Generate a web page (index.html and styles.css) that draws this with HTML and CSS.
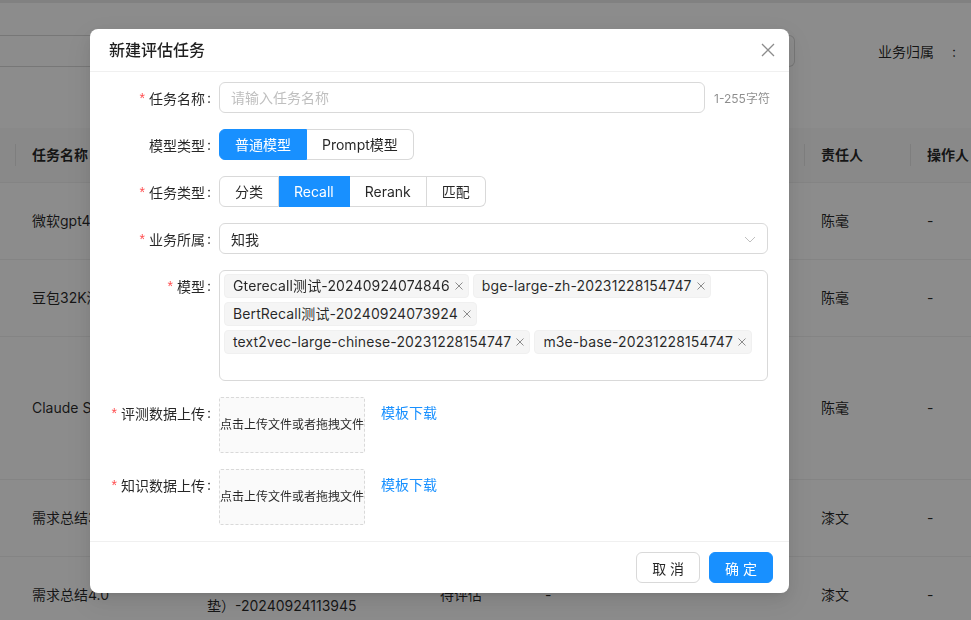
FILE: index.html
```html
<!DOCTYPE html>
<html lang="zh-CN">
<head>
<meta charset="utf-8">
<title>新建评估任务</title>
<link rel="stylesheet" href="styles.css">
</head>
<body>
<div class="page">
  <div class="topbar"></div>
  <div class="filters">
    <div class="search"></div>
    <div class="filter-label">业务归属</div>
    <div class="filter-colon">:</div>
  </div>
  <table class="table">
    <colgroup>
      <col class="c0"><col class="c1"><col class="c2"><col class="c3"><col class="c4"><col class="c5"><col class="c6">
    </colgroup>
    <thead>
      <tr>
        <th class="sep"></th>
        <th class="sep">任务名称</th>
        <th class="sep">评测集</th>
        <th class="sep">状态</th>
        <th class="sep">进度</th>
        <th class="sep">责任人</th>
        <th>操作人</th>
      </tr>
    </thead>
    <tbody>
      <tr class="r77"><td></td><td class="nowrap">微软gpt4o测评</td><td></td><td></td><td></td><td>陈毫</td><td>-</td></tr>
      <tr class="r77"><td></td><td class="nowrap">豆包32K测评</td><td></td><td></td><td></td><td>陈毫</td><td>-</td></tr>
      <tr class="r143"><td></td><td class="nowrap">Claude Sonnet</td><td></td><td></td><td></td><td>陈毫</td><td>-</td></tr>
      <tr class="r77"><td></td><td class="nowrap">需求总结3.0</td><td></td><td></td><td></td><td>漆文</td><td>-</td></tr>
      <tr><td></td><td class="nowrap">需求总结4.0</td><td>需求总结（铺<br>垫）-20240924113945</td><td>待评估</td><td>-</td><td>漆文</td><td>-</td></tr>
    </tbody>
  </table>
</div>

<div class="mask"></div>

<div class="modal">
  <div class="modal-header">
    <div class="modal-title">新建评估任务</div>
    <span class="modal-close">
      <svg width="14" height="14" viewBox="0 0 14 14"><path d="M1 1 L13 13 M13 1 L1 13" stroke="#8c8c8c" stroke-width="1.3" fill="none"/></svg>
    </span>
  </div>
  <div class="modal-body">
    <div class="form-row">
      <div class="form-label"><span class="req">*</span>任务名称<span class="colon">:</span></div>
      <div class="control with-hint">
        <div class="input placeholder">请输入任务名称</div>
        <span class="hint">1-255字符</span>
      </div>
    </div>
    <div class="form-row">
      <div class="form-label">模型类型<span class="colon">:</span></div>
      <div class="control">
        <div class="radio-group">
          <span class="radio-btn checked">普通模型</span><span class="radio-btn">Prompt模型</span>
        </div>
      </div>
    </div>
    <div class="form-row">
      <div class="form-label"><span class="req">*</span>任务类型<span class="colon">:</span></div>
      <div class="control">
        <div class="radio-group">
          <span class="radio-btn">分类</span><span class="radio-btn checked">Recall</span><span class="radio-btn">Rerank</span><span class="radio-btn">匹配</span>
        </div>
      </div>
    </div>
    <div class="form-row">
      <div class="form-label"><span class="req">*</span>业务所属<span class="colon">:</span></div>
      <div class="control">
        <div class="select">
          <span>知我</span>
          <svg class="arrow" width="12" height="12" viewBox="0 0 12 12"><path d="M1 4 L6 9 L11 4" stroke="#bfbfbf" stroke-width="1" fill="none"/></svg>
        </div>
      </div>
    </div>
    <div class="form-row">
      <div class="form-label"><span class="req">*</span>模型<span class="colon">:</span></div>
      <div class="control">
        <div class="multi">
          <span class="tag">Gterecall测试-20240924074846<svg class="tag-x" width="8" height="8" viewBox="0 0 8 8"><path d="M0.5 0.5 L7.5 7.5 M7.5 0.5 L0.5 7.5" stroke="#8c8c8c" stroke-width="1" fill="none"/></svg></span>
          <span class="tag">bge-large-zh-20231228154747<svg class="tag-x" width="8" height="8" viewBox="0 0 8 8"><path d="M0.5 0.5 L7.5 7.5 M7.5 0.5 L0.5 7.5" stroke="#8c8c8c" stroke-width="1" fill="none"/></svg></span>
          <span class="tag">BertRecall测试-20240924073924<svg class="tag-x" width="8" height="8" viewBox="0 0 8 8"><path d="M0.5 0.5 L7.5 7.5 M7.5 0.5 L0.5 7.5" stroke="#8c8c8c" stroke-width="1" fill="none"/></svg></span>
          <span class="tag">text2vec-large-chinese-20231228154747<svg class="tag-x" width="8" height="8" viewBox="0 0 8 8"><path d="M0.5 0.5 L7.5 7.5 M7.5 0.5 L0.5 7.5" stroke="#8c8c8c" stroke-width="1" fill="none"/></svg></span>
          <span class="tag">m3e-base-20231228154747<svg class="tag-x" width="8" height="8" viewBox="0 0 8 8"><path d="M0.5 0.5 L7.5 7.5 M7.5 0.5 L0.5 7.5" stroke="#8c8c8c" stroke-width="1" fill="none"/></svg></span>
          <span class="multi-input"></span>
        </div>
      </div>
    </div>
    <div class="form-row">
      <div class="form-label"><span class="req">*</span>评测数据上传<span class="colon">:</span></div>
      <div class="control upload-row">
        <div class="upload">点击上传文件或者拖拽文件</div>
        <a class="link">模板下载</a>
      </div>
    </div>
    <div class="form-row">
      <div class="form-label"><span class="req">*</span>知识数据上传<span class="colon">:</span></div>
      <div class="control upload-row">
        <div class="upload">点击上传文件或者拖拽文件</div>
        <a class="link">模板下载</a>
      </div>
    </div>
  </div>
  <div class="modal-footer">
    <button class="btn">取 消</button>
    <button class="btn primary">确 定</button>
  </div>
</div>
</body>
</html>
```

FILE: styles.css
```css
* { box-sizing: border-box; }

html, body {
  margin: 0;
  padding: 0;
  height: 100%;
  overflow: hidden;
}

body {
  font-family: Inter, "Noto Sans CJK SC", sans-serif;
  font-size: 14px;
  color: rgba(0, 0, 0, 0.85);
  background: #ffffff;
}

/* ---------- background page ---------- */
.page {
  width: 971px;
}

.topbar {
  height: 3px;
  background: #ececec;
}

.filters {
  display: flex;
  align-items: center;
  margin-top: 32px;
  height: 32px;
}

.search {
  width: 795px;
  height: 32px;
  border: 1px solid #d9d9d9;
  border-left: 0;
  border-radius: 0 6px 6px 0;
}

.filter-label {
  margin-left: 83px;
}

.filter-colon {
  margin-left: 18px;
}

.table {
  margin-top: 61px;
  border-collapse: collapse;
  table-layout: fixed;
  width: 1061px;
  line-height: 22px;
}

.c0 { width: 16px; }
.c1 { width: 175px; }
.c2 { width: 233px; }
.c3 { width: 105px; }
.c4 { width: 276px; }
.c5 { width: 106px; }
.c6 { width: 150px; }

.table th {
  position: relative;
  height: 54px;
  padding: 0 16px;
  text-align: left;
  font-weight: 600;
  background: #fafafa;
  border-bottom: 1px solid #f0f0f0;
  white-space: nowrap;
}

.table th.sep::after {
  content: "";
  position: absolute;
  right: 0;
  top: 50%;
  width: 1px;
  height: 22px;
  transform: translateY(-50%);
  background: #e6e6e6;
}

.table td {
  padding: 16px;
  border-bottom: 1px solid #f0f0f0;
  vertical-align: middle;
  overflow: hidden;
}

.table td.nowrap {
  white-space: nowrap;
}

.r77 { height: 77px; }
.r143 { height: 143px; }

/* ---------- mask + modal ---------- */
.mask {
  position: fixed;
  inset: 0;
  background: rgba(0, 0, 0, 0.45);
}

.modal {
  position: fixed;
  left: 90px;
  top: 29px;
  width: 699px;
  background: #ffffff;
  border-radius: 8px;
  box-shadow: 0 6px 16px 0 rgba(0, 0, 0, 0.08), 0 3px 6px -4px rgba(0, 0, 0, 0.12), 0 9px 28px 8px rgba(0, 0, 0, 0.05);
}

.modal-header {
  display: flex;
  align-items: center;
  justify-content: space-between;
  height: 43px;
  padding: 0 14px 0 19px;
  border-bottom: 1px solid #f0f0f0;
}

.modal-title {
  font-size: 16px;
  font-weight: 500;
  line-height: 22px;
  color: rgba(0, 0, 0, 0.88);
}

.modal-close {
  display: flex;
  width: 14px;
  height: 14px;
}

.modal-body {
  padding: 10px 21px 0 0;
}

.form-row {
  display: grid;
  grid-template-columns: 129px 1fr;
  margin-bottom: 16px;
}

.form-label {
  display: flex;
  align-items: center;
  justify-content: flex-end;
  height: 31px;
  white-space: nowrap;
  color: rgba(0, 0, 0, 0.85);
}

.req {
  color: #ff4d4f;
  margin-right: 4px;
  font-family: "Liberation Sans", sans-serif;
  font-size: 14px;
}

.colon {
  margin: 0 8px 0 2px;
}

.control {
  min-width: 0;
}

.with-hint {
  display: flex;
  align-items: center;
  gap: 9px;
}

.input {
  flex: 0 0 486px;
  height: 31px;
  line-height: 29px;
  padding: 0 11px;
  border: 1px solid #d9d9d9;
  border-radius: 6px;
}

.placeholder {
  color: #bfbfbf;
}

.hint {
  font-size: 12px;
  color: rgba(0, 0, 0, 0.45);
  white-space: nowrap;
}

.radio-group {
  display: inline-flex;
}

.radio-btn {
  height: 31px;
  line-height: 29px;
  padding: 0 15px;
  border: 1px solid #d9d9d9;
  border-left-width: 0;
  background: #ffffff;
  white-space: nowrap;
}

.radio-btn:first-child {
  border-left-width: 1px;
  border-radius: 6px 0 0 6px;
}

.radio-btn:last-child {
  border-radius: 0 6px 6px 0;
}

.radio-btn.checked {
  background: #1890ff;
  border-color: #1890ff;
  color: #ffffff;
}

.select {
  display: flex;
  align-items: center;
  justify-content: space-between;
  height: 31px;
  padding: 0 11px;
  border: 1px solid #d9d9d9;
  border-radius: 6px;
}

.multi {
  display: flex;
  flex-wrap: wrap;
  gap: 4px;
  padding: 3px 4px;
  border: 1px solid #d9d9d9;
  border-radius: 6px;
}

.tag {
  display: inline-flex;
  align-items: center;
  height: 24px;
  line-height: 22px;
  padding: 0 5px 0 8px;
  background: #f5f5f5;
  border: 1px solid #f0f0f0;
  border-radius: 4px;
  white-space: nowrap;
  letter-spacing: 0.12px;
}

.tag-x {
  margin-left: 5px;
}

.multi-input {
  flex-basis: 100%;
  height: 19px;
}

.upload-row {
  display: flex;
  align-items: flex-start;
}

.upload {
  display: flex;
  align-items: center;
  justify-content: center;
  width: 146px;
  height: 56px;
  padding-bottom: 4px;
  border: 1px dashed #d9d9d9;
  border-radius: 2px;
  background: #fafafa;
  font-size: 12px;
  white-space: nowrap;
}

.link {
  margin-left: 16px;
  line-height: 31px;
  color: #1890ff;
  cursor: pointer;
}

.modal-footer {
  display: flex;
  justify-content: flex-end;
  gap: 9px;
  padding: 10px 16px;
  border-top: 1px solid #f0f0f0;
}

.btn {
  height: 31px;
  padding: 0 15px;
  font-family: inherit;
  font-size: 14px;
  color: rgba(0, 0, 0, 0.85);
  background: #ffffff;
  border: 1px solid #d9d9d9;
  border-radius: 6px;
}

.btn.primary {
  color: #ffffff;
  background: #1890ff;
  border-color: #1890ff;
}
```
